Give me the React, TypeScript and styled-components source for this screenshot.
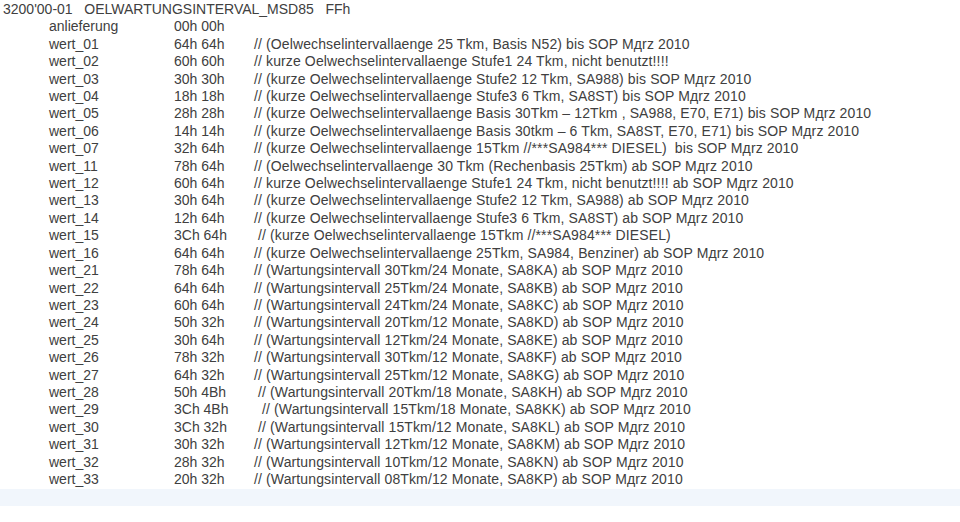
import React from "react";
import styled, { createGlobalStyle } from "styled-components";

const Global = createGlobalStyle`
  html, body { margin: 0; padding: 0; background: #ffffff; }
  body { font-family: "Liberation Sans", Arial, sans-serif; }
`;

const Page = styled.div`
  width: 960px;
  height: 522px;
  background: #ffffff;
  display: flex;
  flex-direction: column;
  overflow: hidden;
`;

const Listing = styled.div`
  padding: 1px 0 0 3px;
  color: #404040;
  font-size: 14px;
  line-height: 17.4px;
`;

const Header = styled.div`
  white-space: pre;
`;

const Row = styled.div`
  display: grid;
  grid-template-columns: 125px 80px 1fr;
  padding-left: 46px;
  white-space: pre;
`;

const Name = styled.span``;
const Value = styled.span``;
const Comment = styled.span<{ $shift?: number }>`
  padding-left: ${(p) => p.$shift ?? 0}px;
  letter-spacing: 0.12px;
`;

const Band = styled.div`
  margin-top: 1px;
  height: 17px;
  background: #f1f6fc;
`;

type Entry = [string, string, string, number?];

const rows: Entry[] = [
  ["anlieferung", "00h 00h", ""],
  ["wert_01", "64h 64h", "// (Oelwechselintervallaenge 25 Tkm, Basis N52) bis SOP Mдrz 2010"],
  ["wert_02", "60h 60h", "// kurze Oelwechselintervallaenge Stufe1 24 Tkm, nicht benutzt!!!!"],
  ["wert_03", "30h 30h", "// (kurze Oelwechselintervallaenge Stufe2 12 Tkm, SA988) bis SOP Mдrz 2010"],
  ["wert_04", "18h 18h", "// (kurze Oelwechselintervallaenge Stufe3 6 Tkm, SA8ST) bis SOP Mдrz 2010"],
  ["wert_05", "28h 28h", "// (kurze Oelwechselintervallaenge Basis 30Tkm – 12Tkm , SA988, E70, E71) bis SOP Mдrz 2010"],
  ["wert_06", "14h 14h", "// (kurze Oelwechselintervallaenge Basis 30tkm – 6 Tkm, SA8ST, E70, E71) bis SOP Mдrz 2010"],
  ["wert_07", "32h 64h", "// (kurze Oelwechselintervallaenge 15Tkm //***SA984*** DIESEL)  bis SOP Mдrz 2010"],
  ["wert_11", "78h 64h", "// (Oelwechselintervallaenge 30 Tkm (Rechenbasis 25Tkm) ab SOP Mдrz 2010"],
  ["wert_12", "60h 64h", "// kurze Oelwechselintervallaenge Stufe1 24 Tkm, nicht benutzt!!!! ab SOP Mдrz 2010"],
  ["wert_13", "30h 64h", "// (kurze Oelwechselintervallaenge Stufe2 12 Tkm, SA988) ab SOP Mдrz 2010"],
  ["wert_14", "12h 64h", "// (kurze Oelwechselintervallaenge Stufe3 6 Tkm, SA8ST) ab SOP Mдrz 2010"],
  ["wert_15", "3Ch 64h", "// (kurze Oelwechselintervallaenge 15Tkm //***SA984*** DIESEL)", 4],
  ["wert_16", "64h 64h", "// (kurze Oelwechselintervallaenge 25Tkm, SA984, Benziner) ab SOP Mдrz 2010"],
  ["wert_21", "78h 64h", "// (Wartungsintervall 30Tkm/24 Monate, SA8KA) ab SOP Mдrz 2010"],
  ["wert_22", "64h 64h", "// (Wartungsintervall 25Tkm/24 Monate, SA8KB) ab SOP Mдrz 2010"],
  ["wert_23", "60h 64h", "// (Wartungsintervall 24Tkm/24 Monate, SA8KC) ab SOP Mдrz 2010"],
  ["wert_24", "50h 32h", "// (Wartungsintervall 20Tkm/12 Monate, SA8KD) ab SOP Mдrz 2010"],
  ["wert_25", "30h 64h", "// (Wartungsintervall 12Tkm/24 Monate, SA8KE) ab SOP Mдrz 2010"],
  ["wert_26", "78h 32h", "// (Wartungsintervall 30Tkm/12 Monate, SA8KF) ab SOP Mдrz 2010"],
  ["wert_27", "64h 32h", "// (Wartungsintervall 25Tkm/12 Monate, SA8KG) ab SOP Mдrz 2010"],
  ["wert_28", "50h 4Bh", "// (Wartungsintervall 20Tkm/18 Monate, SA8KH) ab SOP Mдrz 2010", 4],
  ["wert_29", "3Ch 4Bh", "// (Wartungsintervall 15Tkm/18 Monate, SA8KK) ab SOP Mдrz 2010", 8],
  ["wert_30", "3Ch 32h", "// (Wartungsintervall 15Tkm/12 Monate, SA8KL) ab SOP Mдrz 2010", 4],
  ["wert_31", "30h 32h", "// (Wartungsintervall 12Tkm/12 Monate, SA8KM) ab SOP Mдrz 2010"],
  ["wert_32", "28h 32h", "// (Wartungsintervall 10Tkm/12 Monate, SA8KN) ab SOP Mдrz 2010"],
  ["wert_33", "20h 32h", "// (Wartungsintervall 08Tkm/12 Monate, SA8KP) ab SOP Mдrz 2010"],
];

export default function App() {
  return (
    <Page>
      <Global />
      <Listing>
        <Header>{"3200'00-01   OELWARTUNGSINTERVAL_MSD85   FFh"}</Header>
        {rows.map(([n, v, c, s]) => (
          <Row key={n}>
            <Name>{n}</Name>
            <Value>{v}</Value>
            <Comment $shift={s}>{c}</Comment>
          </Row>
        ))}
      </Listing>
      <Band />
    </Page>
  );
}
